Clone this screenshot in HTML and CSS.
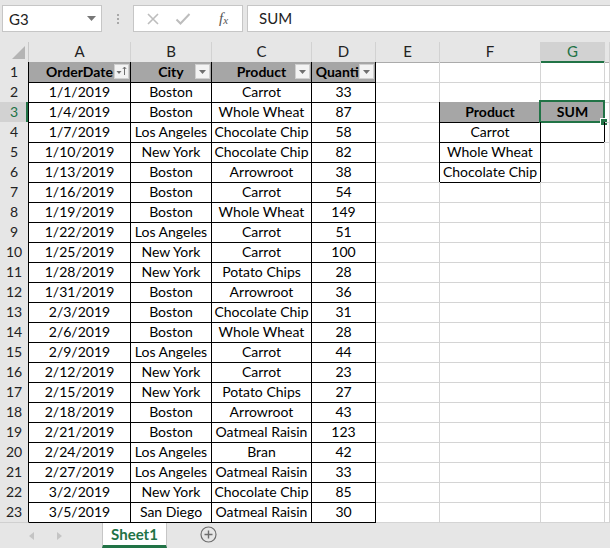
FILE: index.html
```html
<!DOCTYPE html>
<html lang="en">
<head>
    <meta charset="UTF-8">
    <meta name="viewport" content="width=device-width, initial-scale=1.0">
    <title>Book1 - Excel</title>
    <link rel="stylesheet" href="styles.css">
</head>
<body>

    <!-- Formula bar -->
    <div class="formula-bar">
        <div class="name-box">
            <span>G3</span>
            <svg class="name-arrow" width="9" height="5" viewBox="0 0 9 5"><path d="M0 0h9L4.5 5z" fill="#777"/></svg>
        </div>
        <div class="grip"><i></i><i></i><i></i></div>
        <div class="fx-buttons">
            <svg width="14" height="14" viewBox="0 0 14 14"><path d="M2 2l10 10M12 2L2 12" stroke="#bdbdbd" stroke-width="1.6"/></svg>
            <svg width="16" height="14" viewBox="0 0 16 14"><path d="M1.5 7.5l4 4L14.5 2" fill="none" stroke="#bdbdbd" stroke-width="2"/></svg>
            <span class="fx">f<sub>x</sub></span>
        </div>
        <div class="formula-input">SUM</div>
    </div>

    <!-- Sheet grid -->
    <div class="sheet">
        <div class="row col-heads">
            <div class="corner"><svg width="13" height="13" viewBox="0 0 13 13"><path d="M13 0v13H0z" fill="#b4b4b4"/></svg></div>
            <div class="ch">A</div><div class="ch">B</div><div class="ch">C</div><div class="ch">D</div>
            <div class="ch">E</div><div class="ch">F</div><div class="ch sel">G</div><div class="ch"></div>
        </div>

        <div class="row">
            <div class="rh">1</div>
            <div class="cell tb hd">OrderDate<span class="filter"><svg width="15" height="15" viewBox="0 0 15 15"><path d="M2.5 7h5l-2.5 3z" fill="#6f6f6f"/><path d="M10.5 3v8M8.8 5L10.5 3l1.7 2" fill="none" stroke="#6f6f6f" stroke-width="1"/></svg></span></div>
            <div class="cell tb hd">City<span class="filter"><svg width="15" height="15" viewBox="0 0 15 15"><path d="M4 6h7l-3.5 4z" fill="#6f6f6f"/></svg></span></div>
            <div class="cell tb hd">Product<span class="filter"><svg width="15" height="15" viewBox="0 0 15 15"><path d="M4 6h7l-3.5 4z" fill="#6f6f6f"/></svg></span></div>
            <div class="cell tb hd">Quantity<span class="filter"><svg width="15" height="15" viewBox="0 0 15 15"><path d="M4 6h7l-3.5 4z" fill="#6f6f6f"/></svg></span></div>
            <div class="cell"></div><div class="cell"></div><div class="cell"></div><div class="cell"></div>
        </div>

        <div class="row">
            <div class="rh">2</div>
            <div class="cell tb">1/1/2019</div><div class="cell tb">Boston</div><div class="cell tb">Carrot</div><div class="cell tb">33</div>
            <div class="cell"></div><div class="cell edge-b"></div><div class="cell edge-b"></div><div class="cell"></div>
        </div>

        <div class="row">
            <div class="rh sel">3</div>
            <div class="cell tb">1/4/2019</div><div class="cell tb">Boston</div><div class="cell tb">Whole Wheat</div><div class="cell tb">87</div>
            <div class="cell edge-r"></div><div class="cell tb hd">Product</div><div class="cell tb hd active">SUM</div><div class="cell"></div>
        </div>

        <div class="row">
            <div class="rh">4</div>
            <div class="cell tb">1/7/2019</div><div class="cell tb">Los Angeles</div><div class="cell tb">Chocolate Chip</div><div class="cell tb">58</div>
            <div class="cell edge-r"></div><div class="cell tb">Carrot</div><div class="cell tb"></div><div class="cell"></div>
        </div>

        <div class="row">
            <div class="rh">5</div>
            <div class="cell tb">1/10/2019</div><div class="cell tb">New York</div><div class="cell tb">Chocolate Chip</div><div class="cell tb">82</div>
            <div class="cell edge-r"></div><div class="cell tb">Whole Wheat</div><div class="cell"></div><div class="cell"></div>
        </div>

        <div class="row">
            <div class="rh">6</div>
            <div class="cell tb">1/13/2019</div><div class="cell tb">Boston</div><div class="cell tb">Arrowroot</div><div class="cell tb">38</div>
            <div class="cell edge-r"></div><div class="cell tb">Chocolate Chip</div><div class="cell"></div><div class="cell"></div>
        </div>

        <div class="row">
            <div class="rh">7</div>
            <div class="cell tb">1/16/2019</div><div class="cell tb">Boston</div><div class="cell tb">Carrot</div><div class="cell tb">54</div>
            <div class="cell"></div><div class="cell"></div><div class="cell"></div><div class="cell"></div>
        </div>

        <div class="row">
            <div class="rh">8</div>
            <div class="cell tb">1/19/2019</div><div class="cell tb">Boston</div><div class="cell tb">Whole Wheat</div><div class="cell tb">149</div>
            <div class="cell"></div><div class="cell"></div><div class="cell"></div><div class="cell"></div>
        </div>

        <div class="row">
            <div class="rh">9</div>
            <div class="cell tb">1/22/2019</div><div class="cell tb">Los Angeles</div><div class="cell tb">Carrot</div><div class="cell tb">51</div>
            <div class="cell"></div><div class="cell"></div><div class="cell"></div><div class="cell"></div>
        </div>

        <div class="row">
            <div class="rh">10</div>
            <div class="cell tb">1/25/2019</div><div class="cell tb">New York</div><div class="cell tb">Carrot</div><div class="cell tb">100</div>
            <div class="cell"></div><div class="cell"></div><div class="cell"></div><div class="cell"></div>
        </div>

        <div class="row">
            <div class="rh">11</div>
            <div class="cell tb">1/28/2019</div><div class="cell tb">New York</div><div class="cell tb">Potato Chips</div><div class="cell tb">28</div>
            <div class="cell"></div><div class="cell"></div><div class="cell"></div><div class="cell"></div>
        </div>

        <div class="row">
            <div class="rh">12</div>
            <div class="cell tb">1/31/2019</div><div class="cell tb">Boston</div><div class="cell tb">Arrowroot</div><div class="cell tb">36</div>
            <div class="cell"></div><div class="cell"></div><div class="cell"></div><div class="cell"></div>
        </div>

        <div class="row">
            <div class="rh">13</div>
            <div class="cell tb">2/3/2019</div><div class="cell tb">Boston</div><div class="cell tb">Chocolate Chip</div><div class="cell tb">31</div>
            <div class="cell"></div><div class="cell"></div><div class="cell"></div><div class="cell"></div>
        </div>

        <div class="row">
            <div class="rh">14</div>
            <div class="cell tb">2/6/2019</div><div class="cell tb">Boston</div><div class="cell tb">Whole Wheat</div><div class="cell tb">28</div>
            <div class="cell"></div><div class="cell"></div><div class="cell"></div><div class="cell"></div>
        </div>

        <div class="row">
            <div class="rh">15</div>
            <div class="cell tb">2/9/2019</div><div class="cell tb">Los Angeles</div><div class="cell tb">Carrot</div><div class="cell tb">44</div>
            <div class="cell"></div><div class="cell"></div><div class="cell"></div><div class="cell"></div>
        </div>

        <div class="row">
            <div class="rh">16</div>
            <div class="cell tb">2/12/2019</div><div class="cell tb">New York</div><div class="cell tb">Carrot</div><div class="cell tb">23</div>
            <div class="cell"></div><div class="cell"></div><div class="cell"></div><div class="cell"></div>
        </div>

        <div class="row">
            <div class="rh">17</div>
            <div class="cell tb">2/15/2019</div><div class="cell tb">New York</div><div class="cell tb">Potato Chips</div><div class="cell tb">27</div>
            <div class="cell"></div><div class="cell"></div><div class="cell"></div><div class="cell"></div>
        </div>

        <div class="row">
            <div class="rh">18</div>
            <div class="cell tb">2/18/2019</div><div class="cell tb">Boston</div><div class="cell tb">Arrowroot</div><div class="cell tb">43</div>
            <div class="cell"></div><div class="cell"></div><div class="cell"></div><div class="cell"></div>
        </div>

        <div class="row">
            <div class="rh">19</div>
            <div class="cell tb">2/21/2019</div><div class="cell tb">Boston</div><div class="cell tb">Oatmeal Raisin</div><div class="cell tb">123</div>
            <div class="cell"></div><div class="cell"></div><div class="cell"></div><div class="cell"></div>
        </div>

        <div class="row">
            <div class="rh">20</div>
            <div class="cell tb">2/24/2019</div><div class="cell tb">Los Angeles</div><div class="cell tb">Bran</div><div class="cell tb">42</div>
            <div class="cell"></div><div class="cell"></div><div class="cell"></div><div class="cell"></div>
        </div>

        <div class="row">
            <div class="rh">21</div>
            <div class="cell tb">2/27/2019</div><div class="cell tb">Los Angeles</div><div class="cell tb">Oatmeal Raisin</div><div class="cell tb">33</div>
            <div class="cell"></div><div class="cell"></div><div class="cell"></div><div class="cell"></div>
        </div>

        <div class="row">
            <div class="rh">22</div>
            <div class="cell tb">3/2/2019</div><div class="cell tb">New York</div><div class="cell tb">Chocolate Chip</div><div class="cell tb">85</div>
            <div class="cell"></div><div class="cell"></div><div class="cell"></div><div class="cell"></div>
        </div>

        <div class="row">
            <div class="rh">23</div>
            <div class="cell tb">3/5/2019</div><div class="cell tb">San Diego</div><div class="cell tb">Oatmeal Raisin</div><div class="cell tb">30</div>
            <div class="cell"></div><div class="cell"></div><div class="cell"></div><div class="cell"></div>
        </div>
    </div>

    <!-- Sheet tabs -->
    <div class="tab-bar">
        <div class="tab-nav">
            <svg width="5" height="8" viewBox="0 0 5 8"><path d="M5 0v8L0 4z" fill="#c4c4c4"/></svg>
            <svg width="5" height="8" viewBox="0 0 5 8"><path d="M0 0v8l5-4z" fill="#c4c4c4"/></svg>
        </div>
        <div class="tab">Sheet1</div>
        <div class="add-sheet">
            <svg width="17" height="17" viewBox="0 0 17 17"><circle cx="8.5" cy="8.5" r="7.5" fill="none" stroke="#6e6e6e" stroke-width="1.2"/><path d="M8.5 4.5v8M4.5 8.5h8" stroke="#6e6e6e" stroke-width="1.4"/></svg>
        </div>
    </div>

</body>
</html>
```

FILE: styles.css
```css
/* General Reset */
* {
    margin: 0;
    padding: 0;
    box-sizing: border-box;
}

body {
    font-family: Lato, "Open Sans", sans-serif;
    font-size: 14px;
    color: #000;
    background: #fff;
    width: 610px;
    height: 548px;
    overflow: hidden;
}

/* Formula bar */
.formula-bar {
    height: 42px;
    background: #e6e6e6;
    display: flex;
    align-items: flex-start;
    padding: 5px 0 0 2px;
    font-size: 15px;
}

.name-box {
    width: 100px;
    height: 27px;
    background: #fff;
    border: 1px solid #c6c6c6;
    display: flex;
    align-items: center;
    justify-content: space-between;
    padding: 0 5px 0 6px;
    color: #222;
}

.grip {
    width: 31px;
    height: 27px;
    display: flex;
    flex-direction: column;
    align-items: center;
    justify-content: center;
    gap: 2px;
}

.grip i {
    width: 2px;
    height: 2px;
    background: #a8a8a8;
}

.fx-buttons {
    width: 110px;
    height: 27px;
    background: #fff;
    border: 1px solid #c6c6c6;
    display: flex;
    align-items: center;
    padding-left: 12px;
    gap: 15px;
}

.fx {
    font-family: "Liberation Serif", serif;
    font-style: italic;
    font-size: 15px;
    color: #555;
    margin-left: 13px;
}

.fx sub {
    font-size: 11px;
    vertical-align: 0;
    position: relative;
    top: 1px;
}

.formula-input {
    flex: 1;
    height: 27px;
    margin: 0 -4px 0 4px;
    background: #fff;
    border: 1px solid #c6c6c6;
    line-height: 25px;
    padding-left: 11px;
    color: #222;
}

/* Grid */
.row {
    display: grid;
    grid-template-columns: 29px 102px 81px 100px 64px 64px 101px 64px 1fr;
    height: 20px;
}

.corner,
.ch,
.rh {
    background: #e6e6e6;
    color: #222;
}

.corner {
    border-right: 1px solid #c8c8c8;
    border-bottom: 1px solid #ababab;
    display: flex;
    align-items: flex-end;
    justify-content: flex-end;
    padding: 0 3px 3px 0;
}

.ch {
    font-size: 15px;
    text-align: center;
    line-height: 19px;
    border-right: 1px solid #d2d2d2;
    border-bottom: 1px solid #ababab;
}

.ch.sel {
    background: #d2d2d2;
    color: #217346;
    border-bottom: 2px solid #217346;
}

.rh {
    text-align: center;
    line-height: 20px;
    border-right: 1px solid #000;
    border-bottom: 1px solid #d0d0d0;
}

.rh.sel {
    background: #d2d2d2;
    color: #217346;
    box-shadow: inset -2px 0 0 #217346;
}

.cell {
    position: relative;
    text-align: center;
    line-height: 20px;
    white-space: nowrap;
    border-right: 1px solid #d4d4d4;
    border-bottom: 1px solid #d4d4d4;
}

.cell.tb {
    border-color: #000;
}

.cell.edge-r {
    border-right-color: #000;
}

.cell.edge-b {
    border-bottom-color: #000;
}

.cell.hd {
    background: #a6a6a6;
    font-weight: bold;
}

/* Active cell outline */
.cell.active::before {
    content: "";
    position: absolute;
    top: -2px;
    left: -2px;
    right: -1px;
    bottom: -1px;
    border: 2px solid #217346;
}

.cell.active::after {
    content: "";
    position: absolute;
    right: -4px;
    bottom: -4px;
    width: 6px;
    height: 6px;
    background: #217346;
    border: 1px solid #fff;
}

/* Autofilter buttons */
.filter {
    position: absolute;
    top: 2px;
    right: 1px;
    width: 15px;
    height: 15px;
    background: #f3f3f3;
    border: 1px solid #d0d0d0;
    display: flex;
}

.filter svg {
    margin: -1px;
}

/* Sheet tabs */
.tab-bar {
    height: 26px;
    background: #e6e6e6;
    border-top: 1px solid #c6c6c6;
    display: flex;
}

.tab-nav {
    width: 102px;
    display: flex;
    align-items: center;
    gap: 23px;
    padding-left: 29px;
}

.tab {
    width: 65px;
    background: #fff;
    border-left: 1px solid #c6c6c6;
    border-right: 1px solid #c6c6c6;
    border-bottom: 3px solid #217346;
    color: #217346;
    font-size: 15px;
    font-weight: bold;
    text-align: center;
    line-height: 22px;
}

.add-sheet {
    display: flex;
    align-items: center;
    padding-left: 33px;
    padding-bottom: 2px;
}
```
